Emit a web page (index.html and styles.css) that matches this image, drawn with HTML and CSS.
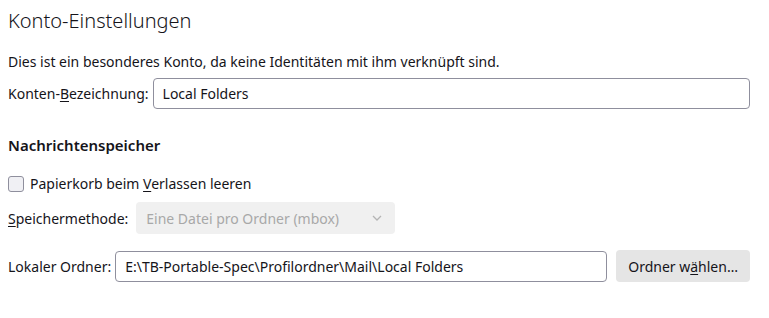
FILE: index.html
```html
<!DOCTYPE html>
<html lang="de">
<head>
    <meta charset="UTF-8">
    <title>Konto-Einstellungen</title>
    <link rel="stylesheet" href="styles.css">
</head>
<body>

<div id="accountSettings">
    <h1>Konto-Einstellungen</h1>
    <p class="intro">Dies ist ein besonderes Konto, da keine Identitäten mit ihm verknüpft sind.</p>

    <div class="row">
        <label for="accountName">Konten-<u>B</u>ezeichnung:</label>
        <input id="accountName" class="textbox grow" type="text" value="Local Folders">
    </div>

    <h2>Nachrichtenspeicher</h2>

    <div class="check-row">
        <span class="checkbox"></span>
        <span>Papierkorb beim <u>V</u>erlassen leeren</span>
    </div>

    <div class="row spaced">
        <label><u>S</u>peichermethode:</label>
        <div class="select">
            <span>Eine Datei pro Ordner (mbox)</span>
            <svg width="12" height="8" viewBox="0 0 12 8">
                <path d="M2 2 L6 6 L10 2" fill="none" stroke="#b4b4b4" stroke-width="1.3"/>
            </svg>
        </div>
    </div>

    <div class="row">
        <label for="localDir">Lokaler Ordner:</label>
        <input id="localDir" class="textbox folder" type="text" value="E:\TB-Portable-Spec\Profilordner\Mail\Local Folders">
        <button class="btn">Ordner w<u>ä</u>hlen…</button>
    </div>
</div>

</body>
</html>
```

FILE: styles.css
```css
body, html {
    margin: 0;
    padding: 0;
    background-color: #fff;
    color: #15141a;
    font-family: "Noto Sans", sans-serif;
    font-size: 14px;
}

/* Wrapper */
#accountSettings {
    padding: 6px 19px 0 8px;
}

h1 {
    font-weight: 300;
    font-size: 20px;
    margin: 0;
    height: 32px;
    line-height: 29px;
}

.intro {
    margin: 14px 0 6px;
    line-height: 20px;
}

.row {
    display: flex;
    align-items: center;
    gap: 4px;
    margin-bottom: 10px;
}

.row.spaced {
    margin-bottom: 16px;
}

label {
    white-space: nowrap;
}

.textbox {
    font-family: inherit;
    font-size: 14px;
    color: #15141a;
    height: 31px;
    box-sizing: border-box;
    border: 1px solid #8f8f9d;
    border-radius: 4px;
    padding: 0 9px;
}

.grow {
    flex: 1;
}

.folder {
    width: 496px;
}

h2 {
    font-size: 15px;
    font-weight: 600;
    margin: 25px 0 18px;
    line-height: 22px;
}

.check-row {
    display: flex;
    align-items: center;
    gap: 6px;
    margin-bottom: 9px;
}

.checkbox {
    width: 14px;
    height: 14px;
    border: 1px solid #8f8f9d;
    border-radius: 3px;
    background-color: #f0f0f4;
}

.select {
    display: flex;
    align-items: center;
    justify-content: space-between;
    width: 259px;
    height: 32px;
    box-sizing: border-box;
    padding: 0 12px 0 10px;
    margin-left: 4px;
    background-color: #f0f0f0;
    color: #a8a8a8;
    border-radius: 4px;
}

.btn {
    font-family: inherit;
    font-size: 14px;
    color: #15141a;
    background-color: #e5e5e5;
    border: none;
    border-radius: 4px;
    height: 32px;
    padding: 0 12px;
    margin-left: 5px;
    white-space: nowrap;
}

u {
    text-underline-offset: 2px;
}
```
